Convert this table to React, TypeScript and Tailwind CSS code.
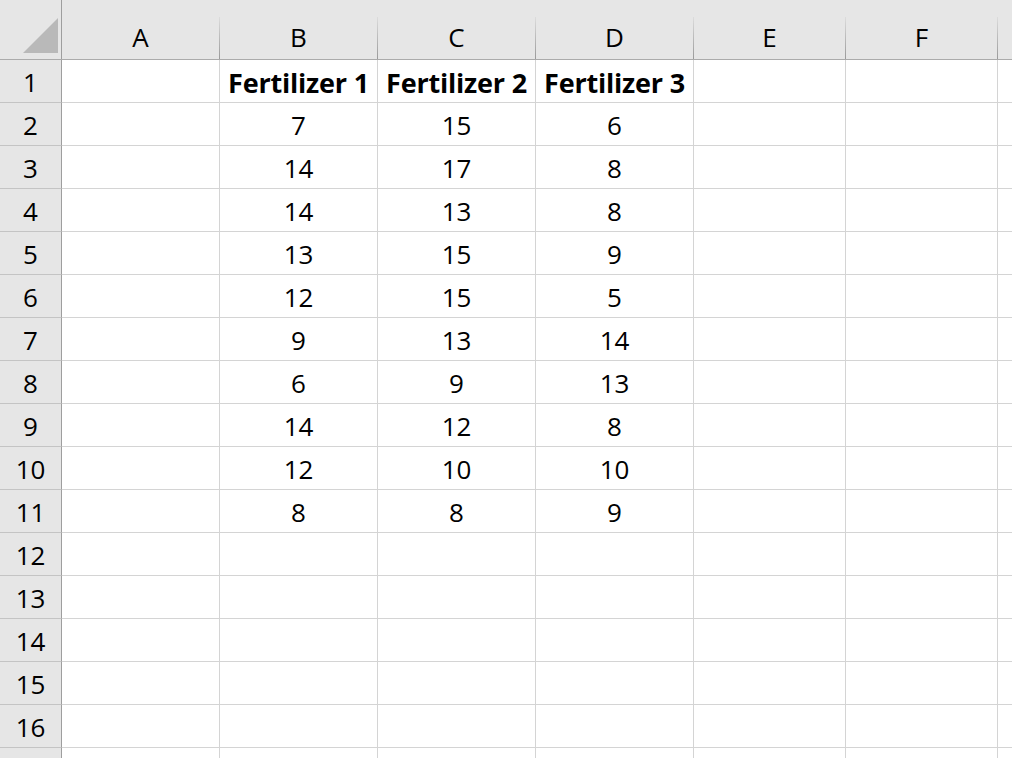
const columns = [
  { label: "A", width: "w-[158px]" },
  { label: "B", width: "w-[158px]" },
  { label: "C", width: "w-[158px]" },
  { label: "D", width: "w-[158px]" },
  { label: "E", width: "w-[152px]" },
  { label: "F", width: "w-[152px]" },
  { label: "", width: "w-[40px]" },
];

const header = ["", "Fertilizer 1", "Fertilizer 2", "Fertilizer 3", "", "", ""];

const values: number[][] = [
  [7, 15, 6],
  [14, 17, 8],
  [14, 13, 8],
  [13, 15, 9],
  [12, 15, 5],
  [9, 13, 14],
  [6, 9, 13],
  [14, 12, 8],
  [12, 10, 10],
  [8, 8, 9],
];

function rowCells(rowIndex: number): string[] {
  if (rowIndex === 0) return header;
  const data = values[rowIndex - 1];
  if (!data) return ["", "", "", "", "", "", ""];
  return ["", String(data[0]), String(data[1]), String(data[2]), "", "", ""];
}

export default function App() {
  // 16 full rows plus the top sliver of row 17
  const rows = Array.from({ length: 17 }, (_, i) => i);

  return (
    <div className="h-[758px] w-[1012px] overflow-hidden bg-white font-['Open_Sans',sans-serif] text-[26px] text-black">
      {/* column header strip */}
      <div className="flex h-[60px] border-b border-[#ababab] bg-[#e6e6e6]">
        <div className="flex w-[62px] shrink-0 items-end border-r border-[#9e9e9e] pb-[2px]">
          <svg width="60" height="60" viewBox="0 0 60 60" className="block">
            <polygon points="23,56 58,56 58,21" fill="#b9b9b9" />
          </svg>
        </div>
        {columns.map((col, i) => (
          <div key={i} className={`flex shrink-0 ${col.width}`}>
            <div className="flex flex-1 items-center justify-center pt-[15px] leading-none">{col.label}</div>
            <div className="h-[42px] w-px self-end bg-gradient-to-b from-[#dcdcdc] to-[#9a9a9a]" />
          </div>
        ))}
      </div>

      {rows.map((r) => (
        <div key={r} className="flex h-[43px]">
          <div className="flex w-[62px] shrink-0 items-center justify-center border-r border-b border-r-[#9e9e9e] border-b-[#c4c4c4] bg-[#e6e6e6] pt-[2px] leading-none">
            {r < 16 ? r + 1 : ""}
          </div>
          {rowCells(r).map((text, c) => (
            <div
              key={c}
              className={`flex shrink-0 items-center justify-center whitespace-nowrap border-r border-b border-[#d4d4d4] pt-[2px] leading-none ${columns[c].width} ${r === 0 ? "text-[27px] font-bold tracking-[-0.2px]" : ""}`}
            >
              {text}
            </div>
          ))}
        </div>
      ))}
    </div>
  );
}
